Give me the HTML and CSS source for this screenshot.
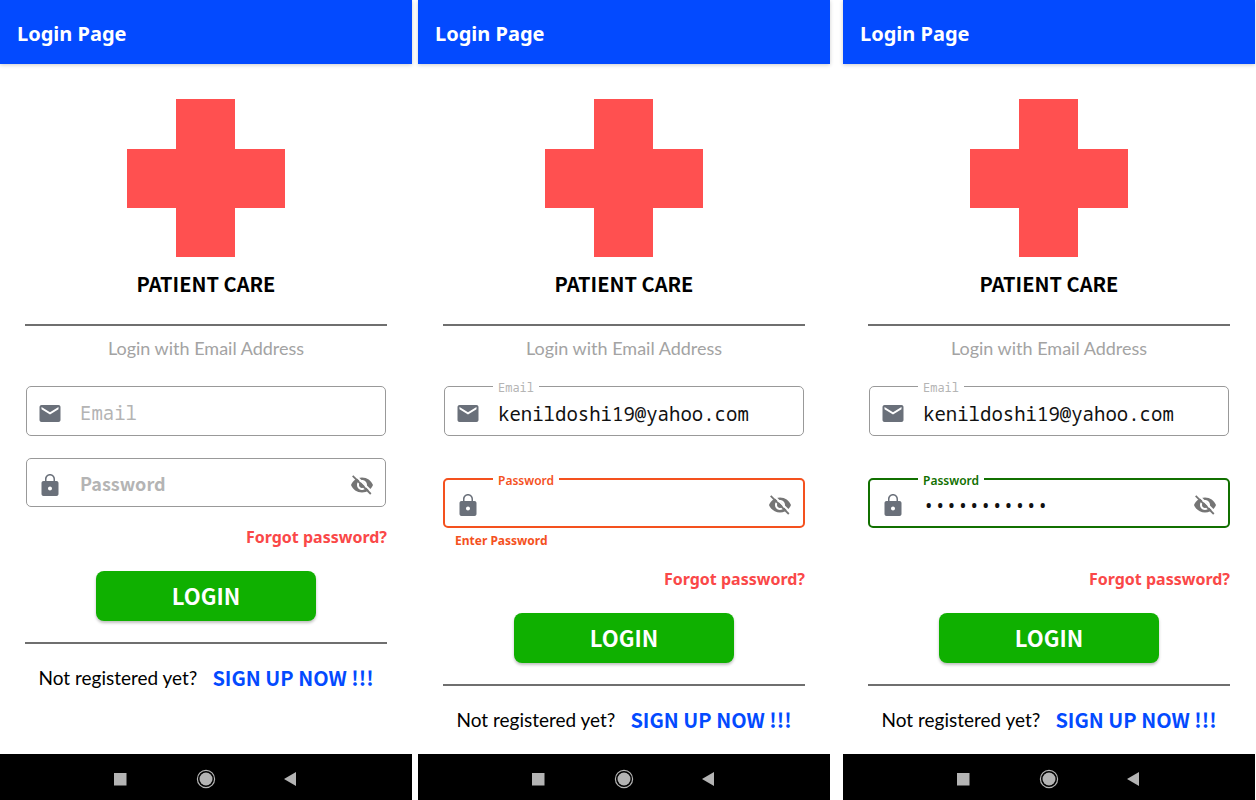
FILE: index.html
```
<!DOCTYPE html>
<html lang="en">
<head>
<meta charset="utf-8">
<meta name="viewport" content="width=device-width, initial-scale=1">
<title>Login Page</title>
<link rel="stylesheet" href="styles.css">
</head>
<body>
<svg class="sprite" aria-hidden="true">
  <symbol id="cross" viewBox="0 0 158 158"><path d="M49 0h59v50h50v59h-50v49H49v-49H0V50h49z"/></symbol>
  <symbol id="mail" viewBox="0 0 24 24"><path d="M20.500 4h-17C2.500 4 1.500 4.900 1.500 6v13c0 1.100.9 2 2 2h17c1.100 0 2-.9 2-2V6c0-1.100-.9-2-2-2zm0 4.200L12 13.400 3.500 8.200V6l8.500 5.300L20.500 6z"/></symbol>
  <symbol id="lock" viewBox="0 0 24 24"><path d="M18.500 8H17V6c0-2.760-2.240-5-5-5S7 3.240 7 6v2H5.500c-1.100 0-2 .9-2 2v11c0 1.100.9 2 2 2h13c1.100 0 2-.9 2-2V10c0-1.100-.9-2-2-2zM12 17.500c-1.100 0-2-.9-2-2s.9-2 2-2 2 .9 2 2-.9 2-2 2zM15.500 8h-7V6c0-1.900 1.500-3.500 3.500-3.500s3.500 1.600 3.500 3.500z"/></symbol>
  <symbol id="eye-off" viewBox="0 0 24 24"><path fill-rule="evenodd" d="M12 4.500C7 4.500 2.730 7.610 1 12c1.730 4.390 6 7.500 11 7.500s9.270-3.110 11-7.500c-1.730-4.390-6-7.500-11-7.500zM12 17c-2.760 0-5-2.240-5-5s2.240-5 5-5 5 2.240 5 5-2.240 5-5 5zm0-8c-1.660 0-3 1.340-3 3s1.340 3 3 3 3-1.340 3-3-1.340-3-3-3z"/><path d="M4.500 1.500L22 19" fill="none" stroke="#fff" stroke-width="2"/><path d="M2.700 2.900L20.800 21" fill="none" stroke="currentColor" stroke-width="1.800"/></symbol>
  <symbol id="recents" viewBox="0 0 20 20"><path d="M2 4h12.500v12.500H2z"/></symbol>
  <symbol id="home" viewBox="0 0 20 20"><circle cx="10" cy="10" r="8.600" fill="none" stroke="currentColor" stroke-width="1.200"/><circle cx="10" cy="10" r="6.500"/></symbol>
  <symbol id="back" viewBox="0 0 20 20"><path d="M4 10L16 3v14z"/></symbol>
</svg>
<div class="board">
  <section class="phone">
    <header class="app-bar"><h1 class="app-title">Login Page</h1></header>
    <main class="content">
      <svg class="logo" aria-hidden="true"><use href="#cross"/></svg>
      <h2 class="brand">PATIENT CARE</h2>
      <hr class="rule">
      <p class="hint">Login with Email Address</p>
      <form class="form">
        <div class="field">
          <svg class="icon" aria-hidden="true"><use href="#mail"/></svg>
          <input class="input" id="email-1" type="email">
          <label class="label label-mono" for="email-1">Email</label>
        </div>
        <div class="field">
          <svg class="icon" aria-hidden="true"><use href="#lock"/></svg>
          <input class="input" id="password-1" type="password">
          <label class="label" for="password-1">Password</label>
          <button class="toggle" type="button" aria-label="Show password"><svg class="icon icon-eye" aria-hidden="true"><use href="#eye-off"/></svg></button>
        </div>
        <a class="forgot" href="#forgot">Forgot password?</a>
        <button class="login" type="submit">LOGIN</button>
      </form>
      <hr class="rule">
      <p class="register"><span>Not registered yet?</span><a class="signup" href="#signup">SIGN UP NOW !!!</a></p>
    </main>
    <nav class="nav-bar" aria-label="System">
      <button class="nav-button" type="button" aria-label="Recents"><svg class="nav-icon" aria-hidden="true"><use href="#recents"/></svg></button>
      <button class="nav-button" type="button" aria-label="Home"><svg class="nav-icon" aria-hidden="true"><use href="#home"/></svg></button>
      <button class="nav-button" type="button" aria-label="Back"><svg class="nav-icon" aria-hidden="true"><use href="#back"/></svg></button>
    </nav>
  </section>

  <section class="phone">
    <header class="app-bar"><h1 class="app-title">Login Page</h1></header>
    <main class="content">
      <svg class="logo" aria-hidden="true"><use href="#cross"/></svg>
      <h2 class="brand">PATIENT CARE</h2>
      <hr class="rule">
      <p class="hint">Login with Email Address</p>
      <form class="form form-active">
        <div class="field field-floating">
          <svg class="icon" aria-hidden="true"><use href="#mail"/></svg>
          <input class="input" id="email-2" type="email" value="kenildoshi19@yahoo.com">
          <label class="label label-mono" for="email-2">Email</label>
        </div>
        <div class="field field-floating field-error">
          <svg class="icon" aria-hidden="true"><use href="#lock"/></svg>
          <input class="input" id="password-2" type="password" aria-describedby="error-2">
          <label class="label" for="password-2">Password</label>
          <button class="toggle" type="button" aria-label="Show password"><svg class="icon icon-eye" aria-hidden="true"><use href="#eye-off"/></svg></button>
        </div>
        <p class="message" id="error-2">Enter Password</p>
        <a class="forgot" href="#forgot">Forgot password?</a>
        <button class="login" type="submit">LOGIN</button>
      </form>
      <hr class="rule">
      <p class="register"><span>Not registered yet?</span><a class="signup" href="#signup">SIGN UP NOW !!!</a></p>
    </main>
    <nav class="nav-bar" aria-label="System">
      <button class="nav-button" type="button" aria-label="Recents"><svg class="nav-icon" aria-hidden="true"><use href="#recents"/></svg></button>
      <button class="nav-button" type="button" aria-label="Home"><svg class="nav-icon" aria-hidden="true"><use href="#home"/></svg></button>
      <button class="nav-button" type="button" aria-label="Back"><svg class="nav-icon" aria-hidden="true"><use href="#back"/></svg></button>
    </nav>
  </section>

  <section class="phone">
    <header class="app-bar"><h1 class="app-title">Login Page</h1></header>
    <main class="content">
      <svg class="logo" aria-hidden="true"><use href="#cross"/></svg>
      <h2 class="brand">PATIENT CARE</h2>
      <hr class="rule">
      <p class="hint">Login with Email Address</p>
      <form class="form form-active">
        <div class="field field-floating">
          <svg class="icon" aria-hidden="true"><use href="#mail"/></svg>
          <input class="input" id="email-3" type="email" value="kenildoshi19@yahoo.com">
          <label class="label label-mono" for="email-3">Email</label>
        </div>
        <div class="field field-floating field-valid">
          <svg class="icon" aria-hidden="true"><use href="#lock"/></svg>
          <input class="input" id="password-3" type="password" value="patientcare">
          <label class="label" for="password-3">Password</label>
          <button class="toggle" type="button" aria-label="Show password"><svg class="icon icon-eye" aria-hidden="true"><use href="#eye-off"/></svg></button>
        </div>
        <p class="message"></p>
        <a class="forgot" href="#forgot">Forgot password?</a>
        <button class="login" type="submit">LOGIN</button>
      </form>
      <hr class="rule">
      <p class="register"><span>Not registered yet?</span><a class="signup" href="#signup">SIGN UP NOW !!!</a></p>
    </main>
    <nav class="nav-bar" aria-label="System">
      <button class="nav-button" type="button" aria-label="Recents"><svg class="nav-icon" aria-hidden="true"><use href="#recents"/></svg></button>
      <button class="nav-button" type="button" aria-label="Home"><svg class="nav-icon" aria-hidden="true"><use href="#home"/></svg></button>
      <button class="nav-button" type="button" aria-label="Back"><svg class="nav-icon" aria-hidden="true"><use href="#back"/></svg></button>
    </nav>
  </section>
</div>
</body>
</html>
```

FILE: styles.css
```
* { box-sizing: border-box; }

body {
  margin: 0;
  background: #fff;
  color: #000;
  font-family: "Noto Sans", "Open Sans", sans-serif;
}

h1, h2, p { margin: 0; }
a { text-decoration: none; }
button { border: 0; padding: 0; background: none; color: inherit; font: inherit; cursor: pointer; }
svg { display: block; fill: currentColor; }

.sprite { position: absolute; width: 0; height: 0; }

.board { display: flex; min-height: 100vh; padding-right: 1px; }
.phone { flex: 1; min-width: 0; display: flex; flex-direction: column; }
.phone:nth-child(2) { margin: 0 13px 0 6px; }

.app-bar {
  display: flex;
  align-items: center;
  height: 64px;
  padding: 4px 17px 0;
  background: #034aff;
  color: #fff;
  box-shadow: 0 1px 4px rgba(0, 0, 0, 0.2);
}
.app-title { font-size: 20px; line-height: 28px; font-weight: 700; }

.content { flex: 1; padding: 35px 25px 0; }
.logo { width: 158px; height: 158px; margin: 0 auto; color: #ff5050; }
.brand { margin-top: 13px; text-align: center; font-family: "Noto Sans CJK SC", sans-serif; font-size: 20px; line-height: 28px; font-weight: 700; }
.rule { height: 2px; margin: 26px 0 0; border: 0; background: #6f6f6f; }
.hint { margin-top: 10px; text-align: center; font-family: Lato, sans-serif; font-size: 18px; line-height: 24px; color: #a3a3a3; }

.form { display: flex; flex-direction: column; margin-top: 26px; }
.field {
  position: relative;
  display: flex;
  align-items: center;
  height: 50px;
  margin: 0 1px;
  padding: 0 11px;
  border: 1px solid #999;
  border-radius: 5px;
  color: #6a707a;
}
.field + .field { height: 49px; margin-top: 22px; }
.form-active .field + .field { height: 50px; margin-top: 42px; }
.icon { flex: none; width: 24px; height: 24px; margin-top: 4px; }
.icon-eye { color: #757575; }
.input {
  flex: 1;
  min-width: 0;
  padding: 6px 0 0 18px;
  border: 0;
  outline: 0;
  background: none;
  color: #111;
  font-family: "Noto Sans Mono", "DejaVu Sans Mono", monospace;
  font-size: 19px;
  line-height: 28px;
}
.toggle { flex: none; }
.label {
  position: absolute;
  left: 53px;
  top: 10px;
  color: #b4b4b4;
  font-family: "Noto Sans CJK SC", sans-serif;
  font-size: 18px;
  line-height: 28px;
  font-weight: 700;
}
.label-mono { top: 12px; font-family: "Noto Sans Mono", "DejaVu Sans Mono", monospace; font-size: 19px; font-weight: 400; }

.field-floating .label {
  left: 48px;
  top: -7px;
  padding: 0 5px;
  background: #fff;
  font-size: 12px;
  line-height: 16px;
}
.field-error, .field-valid { margin-left: 0; margin-right: 0; border-width: 2px; }
.field-error { border-color: #f4511e; }
.field-valid { border-color: #117000; }
.field-error .label, .field-valid .label { font-family: "Noto Sans", sans-serif; font-weight: 600; }
.field-error .label { color: #f4511e; }
.field-valid .label { color: #117000; }
.message { height: 16px; margin: 5px 12px 0; color: #f4511e; font-size: 12px; line-height: 16px; font-weight: 700; }

.forgot { align-self: flex-end; margin-top: 18px; color: #fa4848; font-size: 16px; line-height: 24px; font-weight: 700; }
.login {
  align-self: center;
  width: 61%;
  height: 50px;
  margin-top: 22px;
  padding-bottom: 2px;
  border-radius: 8px;
  background: #0fb000;
  color: #fff;
  font-family: "Noto Sans CJK SC", sans-serif;
  font-size: 22px;
  line-height: 28px;
  font-weight: 700;
  box-shadow: 0 2px 3px rgba(0, 0, 0, 0.25);
}
.content > .form + .rule { margin-top: 21px; }
.register { display: flex; align-items: center; justify-content: center; gap: 15px; margin-top: 20px; font-family: Lato, sans-serif; font-size: 19px; line-height: 28px; }
.signup { color: #034aff; font-family: "Noto Sans CJK SC", sans-serif; font-size: 20px; font-weight: 700; }

.nav-bar { display: flex; align-items: center; justify-content: center; gap: 64px; height: 46px; padding-top: 4px; background: #000; color: #b4b4b4; }
.nav-icon { width: 20px; height: 20px; }
```
